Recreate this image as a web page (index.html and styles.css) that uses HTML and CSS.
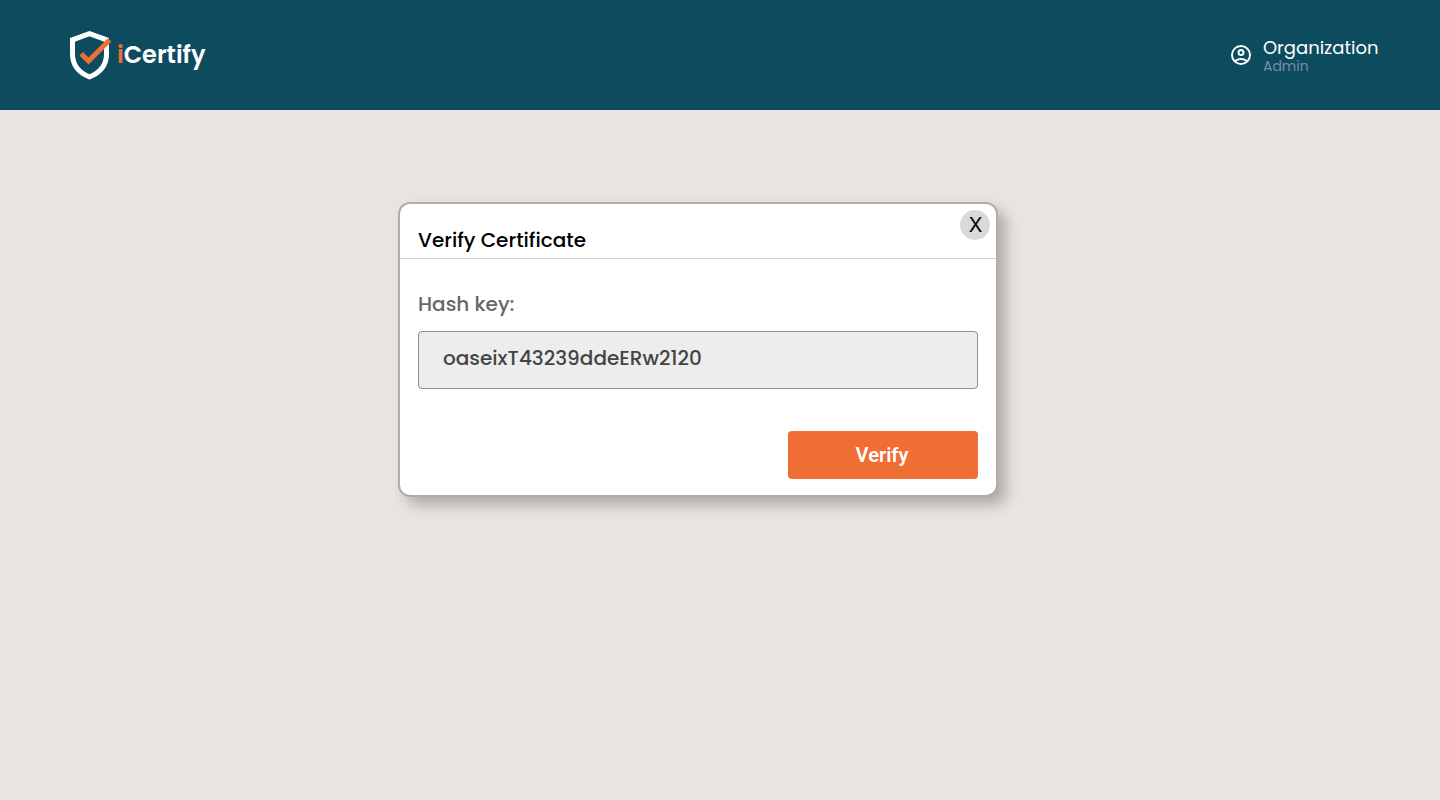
FILE: index.html
```html
<!DOCTYPE html>
<html lang="en">
<head>
<meta charset="utf-8">
<title>iCertify</title>
<link rel="stylesheet" href="styles.css">
</head>
<body>
<header class="topbar">
  <div class="brand">
    <svg class="brand-mark" width="44" height="52" viewBox="0 0 44 52" fill="none">
      <path d="M21.5 4.6L4.5 10.8V25C4.5 36.5 11 43.7 21.5 47.9C32 43.7 38.5 36.5 38.5 25V10.8Z" stroke="#fff" stroke-width="5"/>
      <path d="M13.2 24.7L20.5 32L41.6 10.9" stroke="#f06e34" stroke-width="5"/>
    </svg>
    <span class="brand-name"><span class="brand-accent">i</span>Certify</span>
  </div>
  <div class="account">
    <svg class="account-icon" width="24" height="24" viewBox="0 0 24 24" fill="#fff">
      <path d="M12 2a10 10 0 1 0 0 20 10 10 0 0 0 0-20zM7.35 18.5C8.66 17.56 10.26 17 12 17s3.34.56 4.65 1.5C15.34 19.44 13.74 20 12 20s-3.34-.56-4.65-1.5zm10.79-1.38a9.95 9.95 0 0 0-12.28 0A8 8 0 1 1 20 12c0 1.95-.7 3.73-1.86 5.12z"/>
      <path d="M12 6a3.5 3.5 0 1 0 0 7 3.5 3.5 0 0 0 0-7zm0 5a1.5 1.5 0 1 1 0-3 1.5 1.5 0 0 1 0 3z"/>
    </svg>
    <div class="account-text">
      <span class="account-name">Organization</span>
      <span class="account-role">Admin</span>
    </div>
  </div>
</header>
<main class="page">
  <section class="dialog">
    <div class="dialog-head">
      <h1 class="dialog-title">Verify Certificate</h1>
      <button class="close">X</button>
    </div>
    <div class="dialog-body">
      <label class="label" for="hash">Hash key:</label>
      <div class="field" id="hash"><span class="field-value">oaseixT43239ddeERw2120</span></div>
      <button class="verify">Verify</button>
    </div>
  </section>
</main>
</body>
</html>
```
FILE: styles.css
```css
* { box-sizing: border-box; }
body {
  margin: 0;
  min-height: 800px;
  background: #e8e4e1;
  font-family: Poppins, Inter, "Open Sans", sans-serif;
}
button { border: 0; padding: 0; font-family: inherit; }
.topbar {
  height: 110px;
  padding: 0 61.5px 0 68px;
  background: #0d4b5f;
  display: flex;
  align-items: center;
  justify-content: space-between;
}
.brand { display: flex; align-items: center; gap: 5px; }
.brand-mark { display: block; }
.brand-name {
  color: #fff;
  font-size: 24px;
  font-weight: 600;
  line-height: 36px;
}
.brand-accent { color: #f06e34; }
.account { display: flex; align-items: center; gap: 9.5px; }
.account-icon { display: block; }
.account-text { display: flex; flex-direction: column; padding-top: 3px; }
.account-name { color: #fff; font-size: 18px; line-height: 20px; }
.account-role { color: #7c88b0; font-size: 14px; line-height: 17px; }
.page { padding-top: 92px; }
.dialog {
  width: 600px;
  height: 295px;
  margin-left: 398px;
  background: #fff;
  border: 2px solid #b9aaa1;
  border-radius: 12px;
  box-shadow: 8px 8px 14px rgba(0, 0, 0, .25);
}
.dialog-head {
  height: 55px;
  padding: 6px 6px 0 18px;
  border-bottom: 1px solid #ccc;
  display: flex;
  justify-content: space-between;
}
.dialog-title {
  margin: 15px 0 0;
  font-size: 20px;
  font-weight: 500;
  line-height: 30px;
}
.close {
  width: 30px;
  height: 30px;
  padding-left: 1px;
  border-radius: 50%;
  background: #d9d9d9;
  color: #000;
  font-family: Inter, sans-serif;
  font-size: 20px;
  font-weight: 400;
  line-height: 30px;
}
.dialog-body {
  padding: 30px 18px 0;
  display: flex;
  flex-direction: column;
}
.label { color: #666; font-size: 20px; font-weight: 500; line-height: 30px; }
.field {
  height: 58px;
  margin-top: 12px;
  padding: 0 24px 5px;
  border: 1px solid #8c8c8c;
  border-radius: 4px;
  background: #ededed;
  display: flex;
  align-items: center;
}
.field-value { color: #444; font-size: 20px; font-weight: 500; }
.verify {
  width: 190px;
  height: 48px;
  margin-top: 42px;
  padding-right: 2px;
  align-self: flex-end;
  border-radius: 4px;
  background: #f06e34;
  color: #fff;
  font-family: Roboto, sans-serif;
  font-size: 20px;
  font-weight: 600;
}
```
